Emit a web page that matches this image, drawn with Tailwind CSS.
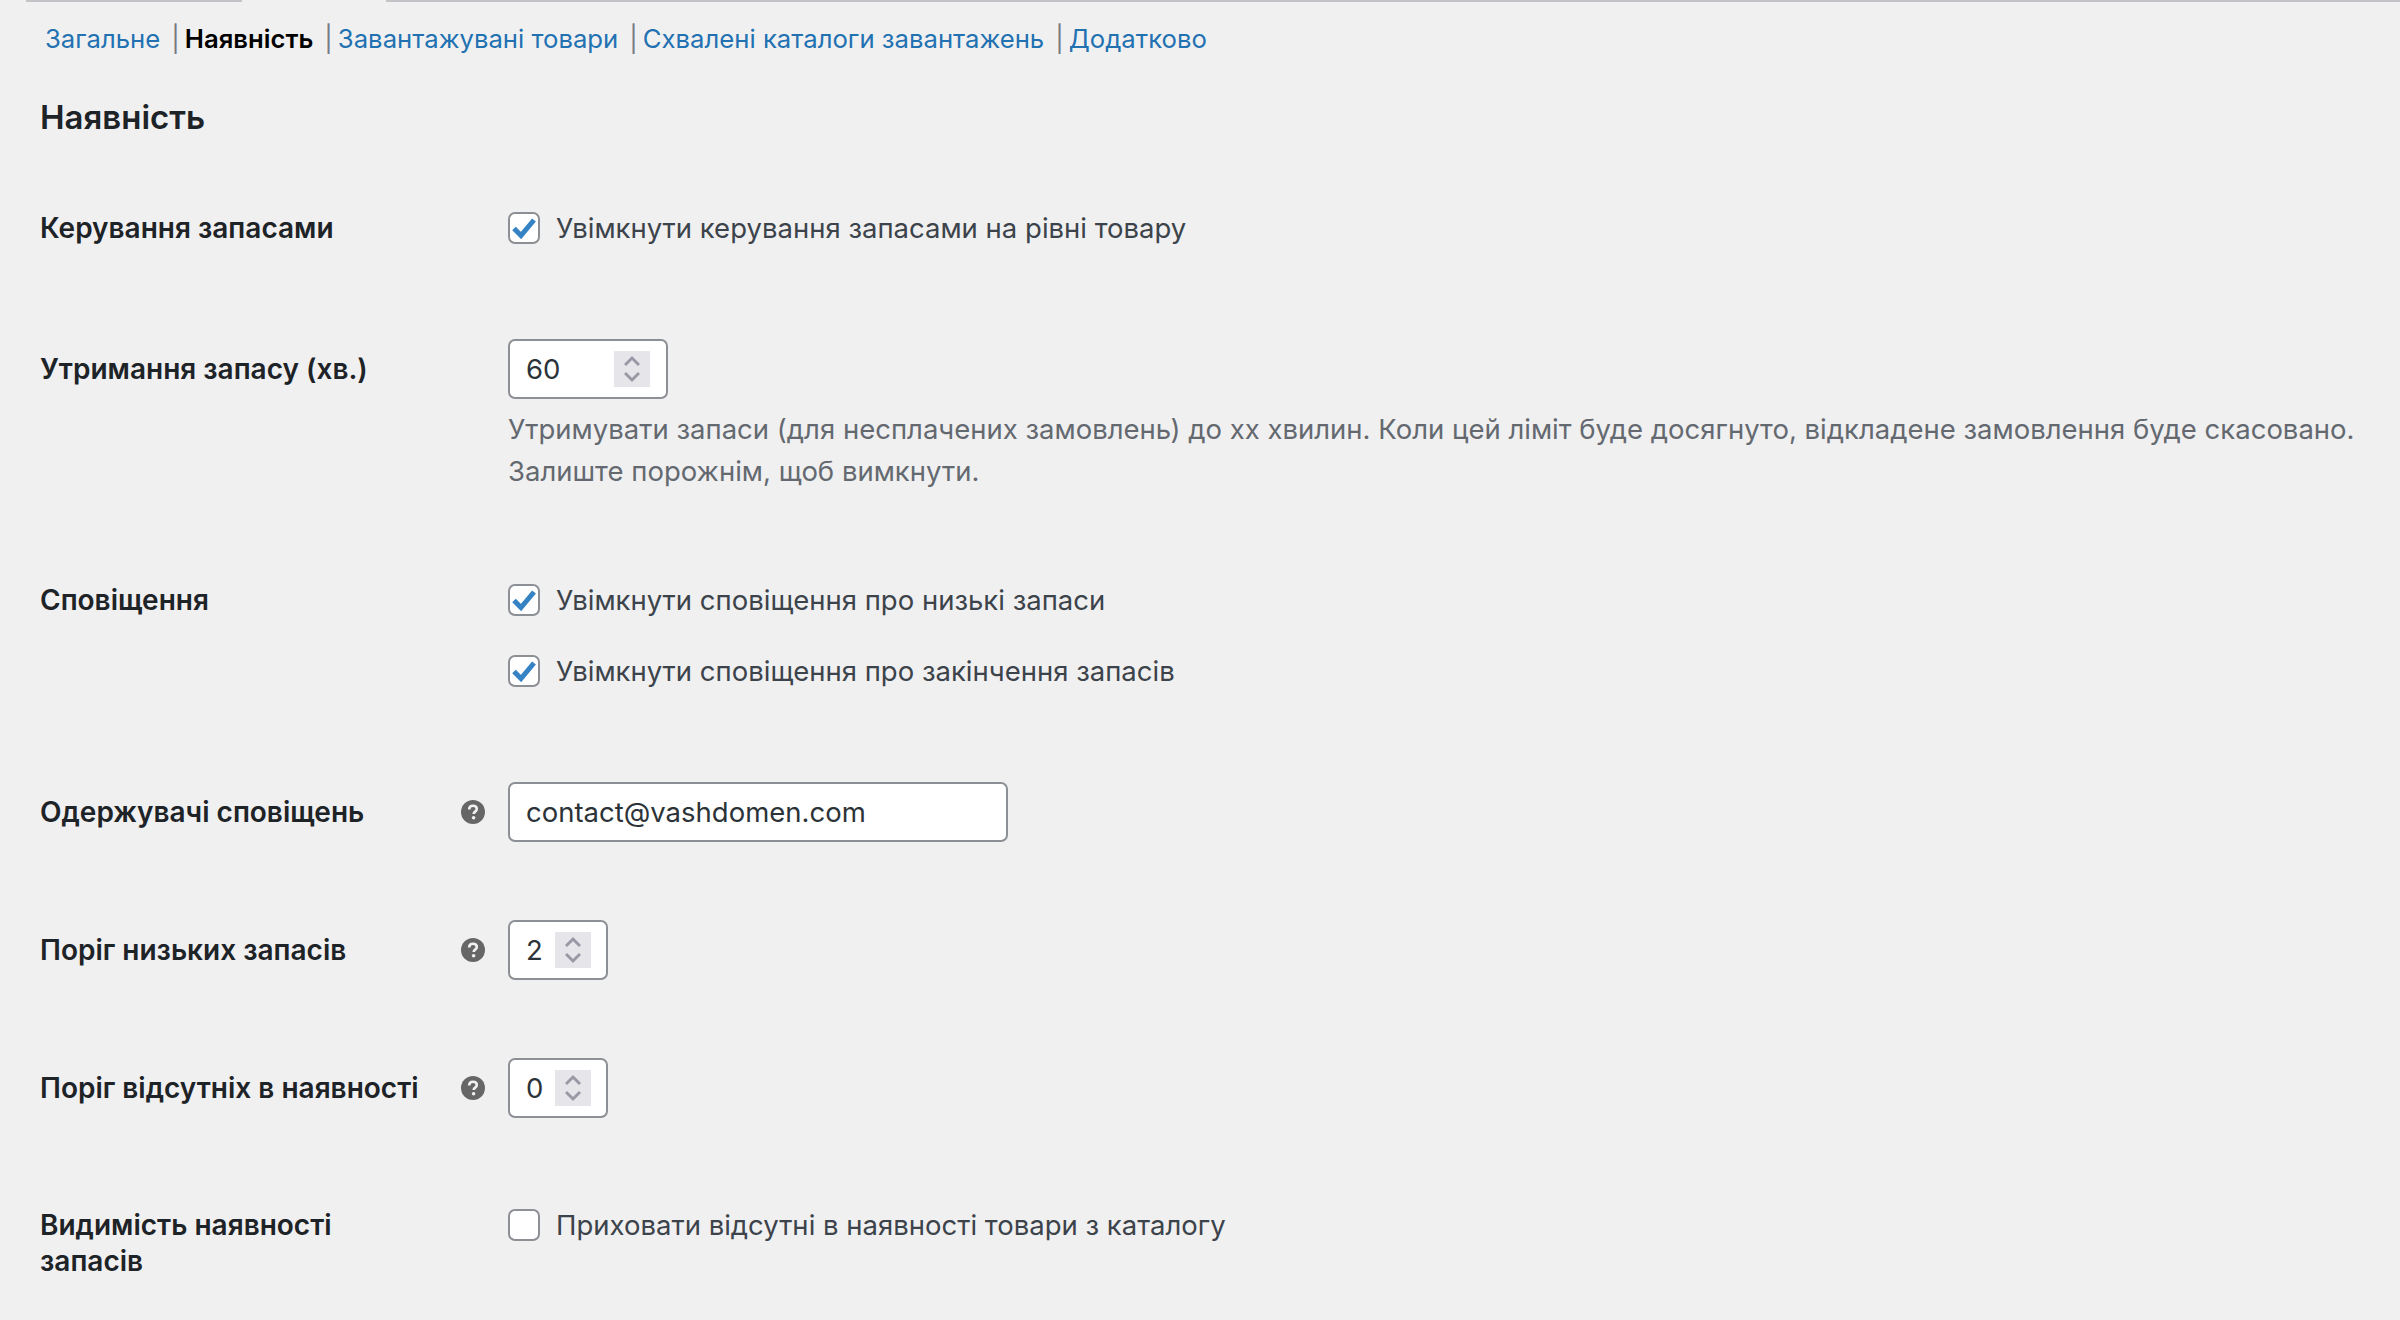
<!DOCTYPE html>
<html lang="uk">
<head>
  <meta charset="UTF-8" />
  <title>Наявність</title>
  <script src="https://cdn.jsdelivr.net/npm/@tailwindcss/browser@4"></script>
</head>
<body class="bg-[#f0f0f1] font-['Inter','Noto_Sans',sans-serif] text-[27.5px] text-[#3c434a] w-[2400px] h-[1320px] overflow-hidden">

  <!-- Tabs edge -->
  <div class="flex h-[2px] pl-[26px]">
    <div class="w-[216px] bg-[#c3c4c7]"></div>
    <div class="w-[144px]"></div>
    <div class="flex-1 bg-[#c3c4c7]"></div>
  </div>

  <!-- Sub nav -->
  <nav class="flex items-center h-[34px] mt-[20px] pl-[45px] text-[25.7px] text-[#2271b1] leading-[34px]">
    <a>Загальне</a>
    <span class="ml-[11px] mr-[5px] text-[#787c82]">|</span>
    <a class="font-semibold text-black">Наявність</a>
    <span class="ml-[11px] mr-[5px] text-[#787c82]">|</span>
    <a>Завантажувані товари</a>
    <span class="ml-[11px] mr-[5px] text-[#787c82]">|</span>
    <a>Схвалені каталоги завантажень</a>
    <span class="ml-[11px] mr-[5px] text-[#787c82]">|</span>
    <a>Додатково</a>
  </nav>

  <main class="pl-[40px]">
    <h2 class="mt-[42px] text-[33px] leading-[38px] font-semibold text-[#1d2327]">Наявність</h2>

    <!-- Керування запасами -->
    <div class="flex mt-[76px]">
      <div class="w-[444px] mr-[24px] text-[28px] font-semibold text-[#1d2327] leading-[32px]">Керування запасами</div>
      <label class="flex items-center gap-[16px] h-[32px]">
        <span class="w-[32px] h-[32px] bg-white border-2 border-[#8c8f94] rounded-[7px] flex items-center justify-center">
          <svg width="24" height="22" viewBox="0 0 24 22"><path d="M2 11.5l7 7L22 3" fill="none" stroke="#3582c4" stroke-width="5"/></svg>
        </span>
        <span class="pt-[2px]">Увімкнути керування запасами на рівні товару</span>
      </label>
    </div>

    <!-- Утримання запасу -->
    <div class="flex mt-[95px]">
      <div class="w-[444px] mr-[24px] text-[28px] font-semibold text-[#1d2327] leading-[60px]">Утримання запасу (хв.)</div>
      <div>
        <div class="flex items-center justify-between w-[160px] h-[60px] pl-[16px] pr-[16px] bg-white border-2 border-[#8c8f94] rounded-[7px] text-[#2c3338]">
          <span class="pt-[2px]">60</span>
          <span class="w-[36px] h-[36px] bg-[#e6e5ea] flex items-center justify-center">
            <svg width="16" height="28" viewBox="0 0 16 28"><path d="M1 10l7-7 7 7M1 18l7 7 7-7" fill="none" stroke="#9b98a6" stroke-width="3"/></svg>
          </span>
        </div>
        <p class="mt-[9px] leading-[42px] text-[#646970] w-[1880px]">Утримувати запаси (для несплачених замовлень) до хх хвилин. Коли цей ліміт буде досягнуто, відкладене замовлення буде скасовано. Залиште порожнім, щоб вимкнути.</p>
      </div>
    </div>

    <!-- Сповіщення -->
    <div class="flex mt-[92px]">
      <div class="w-[444px] mr-[24px] text-[28px] font-semibold text-[#1d2327] leading-[32px]">Сповіщення</div>
      <div class="flex flex-col gap-[39px]">
        <label class="flex items-center gap-[16px] h-[32px]">
          <span class="w-[32px] h-[32px] bg-white border-2 border-[#8c8f94] rounded-[7px] flex items-center justify-center">
            <svg width="24" height="22" viewBox="0 0 24 22"><path d="M2 11.5l7 7L22 3" fill="none" stroke="#3582c4" stroke-width="5"/></svg>
          </span>
          <span class="pt-[2px]">Увімкнути сповіщення про низькі запаси</span>
        </label>
        <label class="flex items-center gap-[16px] h-[32px]">
          <span class="w-[32px] h-[32px] bg-white border-2 border-[#8c8f94] rounded-[7px] flex items-center justify-center">
            <svg width="24" height="22" viewBox="0 0 24 22"><path d="M2 11.5l7 7L22 3" fill="none" stroke="#3582c4" stroke-width="5"/></svg>
          </span>
          <span class="pt-[2px]">Увімкнути сповіщення про закінчення запасів</span>
        </label>
      </div>
    </div>

    <!-- Одержувачі сповіщень -->
    <div class="flex mt-[95px]">
      <div class="flex items-center justify-between w-[445px] mr-[23px] h-[60px]">
        <span class="text-[28px] font-semibold text-[#1d2327]">Одержувачі сповіщень</span>
        <svg width="24" height="24" viewBox="0 0 24 24"><circle cx="12" cy="12" r="12" fill="#666"/><path d="M8.2 9.4c0-2.2 1.6-3.6 3.8-3.6s3.8 1.3 3.8 3.2c0 2.6-3.1 2.6-3.1 4.9" fill="none" stroke="#f0f0f1" stroke-width="2.6"/><circle cx="12.6" cy="17.8" r="1.8" fill="#f0f0f1"/></svg>
      </div>
      <div class="flex items-center w-[500px] h-[60px] pl-[16px] pt-[2px] bg-white border-2 border-[#8c8f94] rounded-[7px] text-[#2c3338]">contact@vashdomen.com</div>
    </div>

    <!-- Поріг низьких запасів -->
    <div class="flex mt-[78px]">
      <div class="flex items-center justify-between w-[445px] mr-[23px] h-[60px]">
        <span class="text-[28px] font-semibold text-[#1d2327]">Поріг низьких запасів</span>
        <svg width="24" height="24" viewBox="0 0 24 24"><circle cx="12" cy="12" r="12" fill="#666"/><path d="M8.2 9.4c0-2.2 1.6-3.6 3.8-3.6s3.8 1.3 3.8 3.2c0 2.6-3.1 2.6-3.1 4.9" fill="none" stroke="#f0f0f1" stroke-width="2.6"/><circle cx="12.6" cy="17.8" r="1.8" fill="#f0f0f1"/></svg>
      </div>
      <div class="flex items-center justify-between w-[100px] h-[60px] pl-[16px] pr-[15px] bg-white border-2 border-[#8c8f94] rounded-[7px] text-[#2c3338]">
        <span class="pt-[2px]">2</span>
        <span class="w-[36px] h-[36px] bg-[#e6e5ea] flex items-center justify-center">
          <svg width="16" height="28" viewBox="0 0 16 28"><path d="M1 10l7-7 7 7M1 18l7 7 7-7" fill="none" stroke="#9b98a6" stroke-width="3"/></svg>
        </span>
      </div>
    </div>

    <!-- Поріг відсутніх в наявності -->
    <div class="flex mt-[78px]">
      <div class="flex items-center justify-between w-[445px] mr-[23px] h-[60px]">
        <span class="text-[28px] font-semibold text-[#1d2327]">Поріг відсутніх в наявності</span>
        <svg width="24" height="24" viewBox="0 0 24 24"><circle cx="12" cy="12" r="12" fill="#666"/><path d="M8.2 9.4c0-2.2 1.6-3.6 3.8-3.6s3.8 1.3 3.8 3.2c0 2.6-3.1 2.6-3.1 4.9" fill="none" stroke="#f0f0f1" stroke-width="2.6"/><circle cx="12.6" cy="17.8" r="1.8" fill="#f0f0f1"/></svg>
      </div>
      <div class="flex items-center justify-between w-[100px] h-[60px] pl-[16px] pr-[15px] bg-white border-2 border-[#8c8f94] rounded-[7px] text-[#2c3338]">
        <span class="pt-[2px]">0</span>
        <span class="w-[36px] h-[36px] bg-[#e6e5ea] flex items-center justify-center">
          <svg width="16" height="28" viewBox="0 0 16 28"><path d="M1 10l7-7 7 7M1 18l7 7 7-7" fill="none" stroke="#9b98a6" stroke-width="3"/></svg>
        </span>
      </div>
    </div>

    <!-- Видимість наявності запасів -->
    <div class="flex mt-[91px]">
      <div class="w-[340px] mr-[128px] text-[28px] font-semibold text-[#1d2327] leading-[36px] -mt-[2px]">Видимість наявності запасів</div>
      <label class="flex items-center gap-[16px] h-[32px]">
        <span class="w-[32px] h-[32px] bg-white border-2 border-[#8c8f94] rounded-[7px]"></span>
        <span class="pt-[2px]">Приховати відсутні в наявності товари з каталогу</span>
      </label>
    </div>
  </main>
</body>
</html>
